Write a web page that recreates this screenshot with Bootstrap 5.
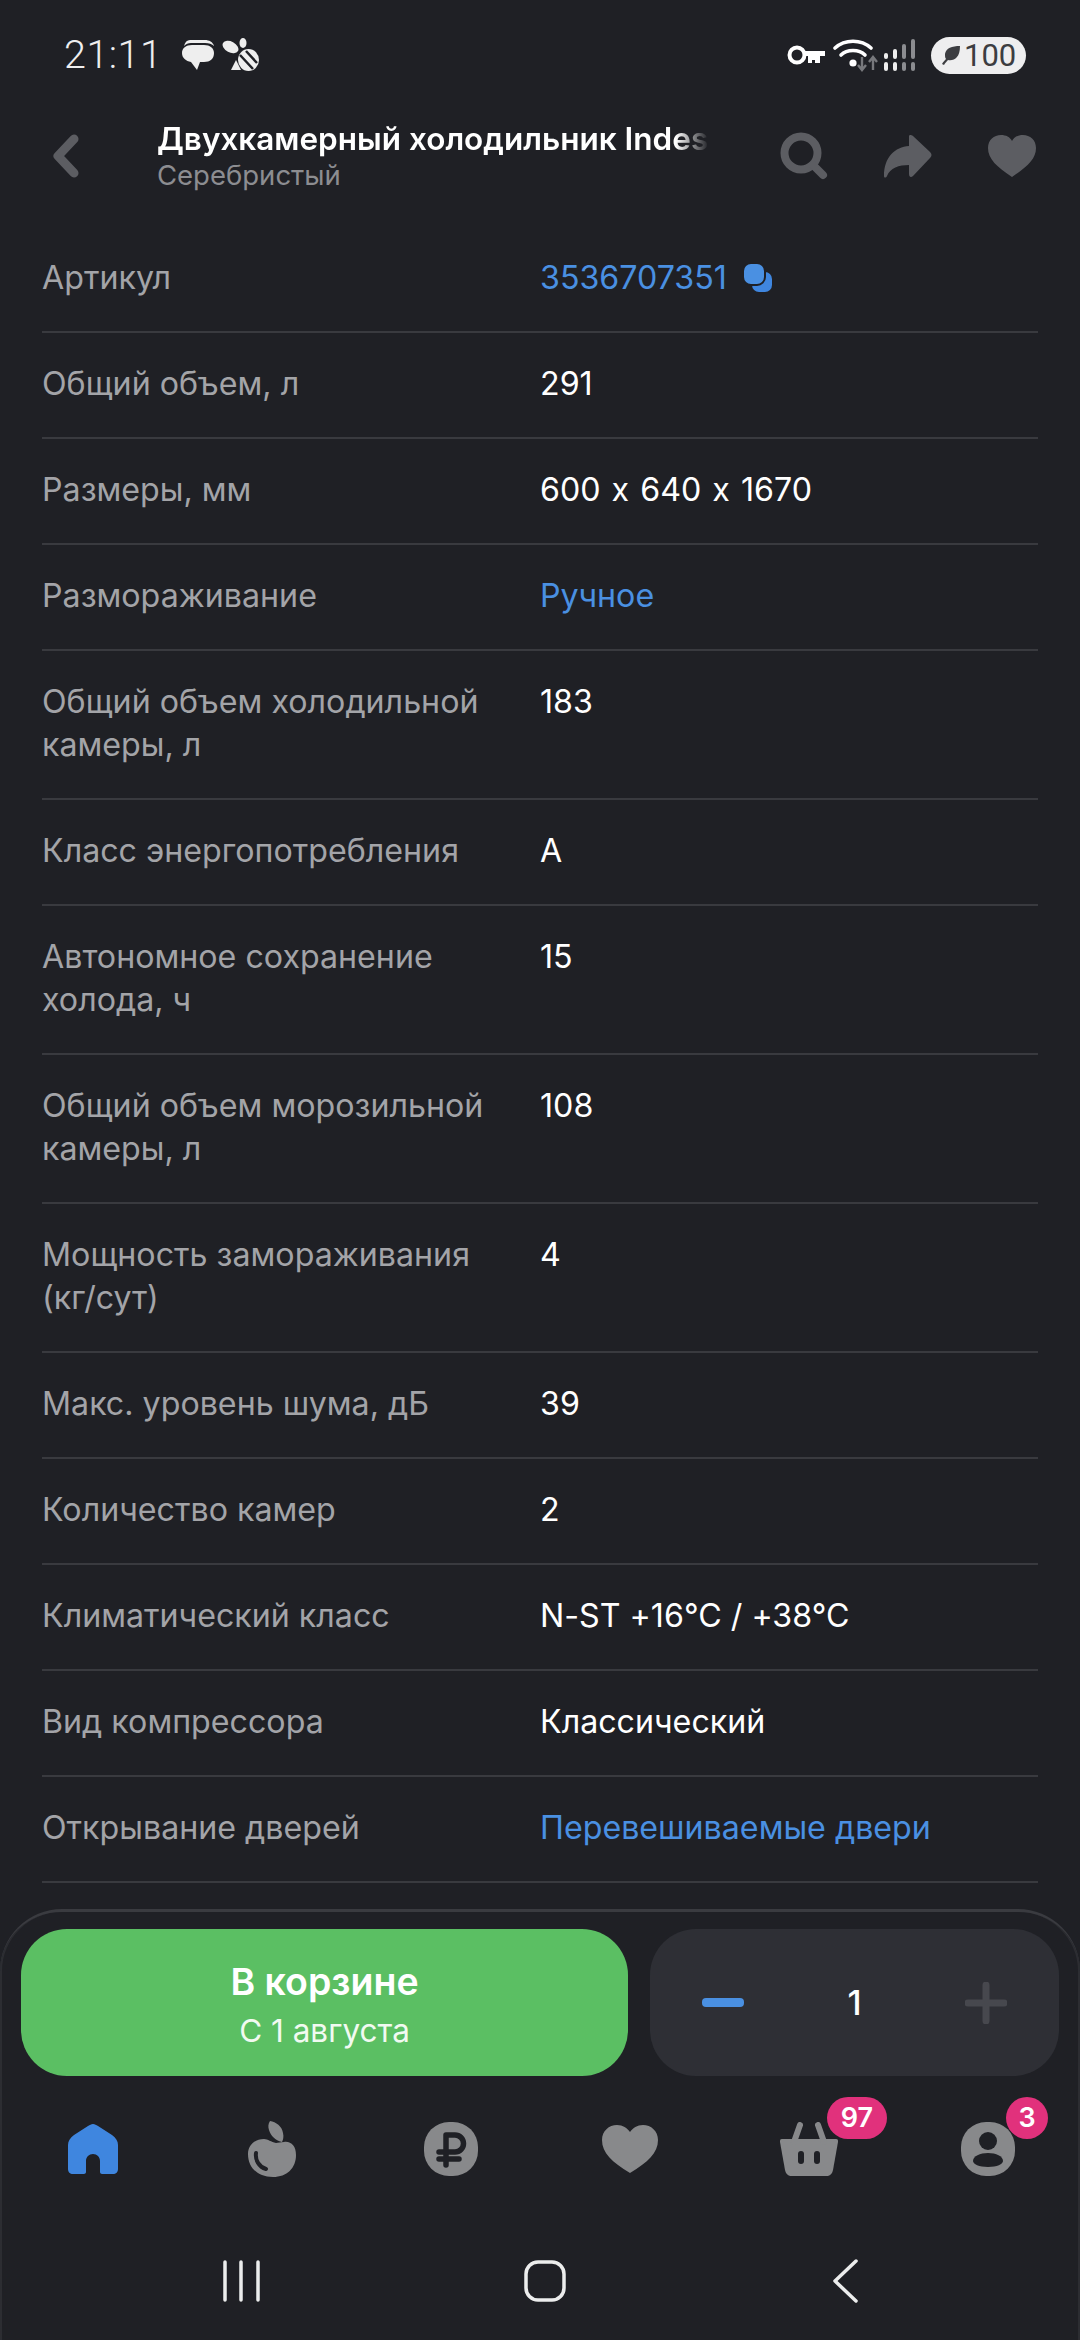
<!DOCTYPE html>
<html lang="ru">
<head>
  <meta charset="UTF-8">
  <meta name="viewport" content="width=device-width, initial-scale=1.0">
  <title>Характеристики</title>
  <link href="https://cdn.jsdelivr.net/npm/bootstrap@5.3.0/dist/css/bootstrap.min.css" rel="stylesheet">
  <style>
    body { background: #1f2025; color: #fff; font-family: Inter, "Noto Sans", sans-serif; font-feature-settings: "calt" 0; }
    .phone { width: 1080px; height: 2340px; overflow: hidden; }
    svg { display: block; flex: none; }

    .status-bar { height: 90px; padding: 20px 54px 0 64px; }
    .status-time { font-family: Roboto, sans-serif; font-weight: 300; font-size: 39.5px; line-height: 1; color: #eeeeef; letter-spacing: .5px; }
    .status-chat { margin-left: 20px; }
    .battery-pill { width: 95px; height: 37px; border-radius: 19px; background: #eeeeef; color: #3c3d41; font-family: Roboto, sans-serif; font-size: 31px; line-height: 37px; padding-left: 10px; gap: 3px; }

    .top-bar { height: 137px; padding: 0 0 6px 52px; }
    .title-box { width: 552px; margin-left: 78px; }
    .title-main { font-size: 31.5px; font-weight: 600; line-height: 40px; white-space: nowrap; -webkit-mask-image: linear-gradient(to right, #000 94%, transparent 100%); mask-image: linear-gradient(to right, #000 94%, transparent 100%); }
    .title-sub { font-size: 27.5px; line-height: 33px; color: #8c8d91; }
    .top-actions { margin-left: 71px; gap: 56px; }

    .spec-list { padding: 0 42px; }
    .spec-row { display: flex; border-bottom: 2px solid #393a3f; padding: 29px 0 32px; font-size: 32.2px; line-height: 43px; }
    .spec-label { width: 498px; flex: none; color: #a3a4a8; }
    .spec-value { color: #fff; }
    .spec-link { color: #4a90e2; }
    .spec-dims { word-spacing: 2px; }

    .bottom-sheet { height: 431px; margin-top: 25px; border-top: 3px solid #3a3b40; border-radius: 62px 62px 0 0; box-shadow: inset 3px 0 0 -1px #2c2d32, inset -3px 0 0 -1px #2c2d32; background: #1f2025; padding-top: 17px; flex: none; }
    .buy-row { padding: 0 21px; gap: 22px; height: 147px; }
    .buy-btn { width: 607px; height: 147px; padding-top: 5px; border-radius: 46px; background: #5bbf63; color: #fff; }
    .buy-title { font-size: 37.5px; font-weight: 600; line-height: 44px; }
    .buy-sub { font-size: 31.5px; line-height: 40px; margin-top: 7px; color: #f1faf1; }
    .qty-box { width: 409px; height: 147px; border-radius: 46px; background: #2e2f35; padding: 0 52px; font-size: 34px; font-weight: 500; }

    .tab-bar { padding: 0 3px; height: 100px; margin-top: 43px; }
    .tab-item { width: 179px; height: 60px; position: relative; }
    .tab-badge { position: absolute; top: -22px; height: 42px; border-radius: 21px; background: #e1317c; color: #fff; font-size: 27px; font-weight: 600; line-height: 42px; text-align: center; }
    .badge-cart { left: 108px; width: 60px; }
    .badge-user { left: 108px; width: 42px; }

    .gesture-bar { height: 42px; margin-top: 41px; padding: 0 222px; }
    .gesture-bar svg:nth-child(2) { margin-left: -2px; }
  </style>
</head>
<body>
<div class="phone d-flex flex-column">

  <div class="status-bar d-flex align-items-center">
    <span class="status-time">21:11</span>
    <svg class="status-chat" width="32" height="32" viewBox="0 0 32 32"><path d="M8 1h15c4 0 8 2 9 6-2-2-5-3-9-3H9C6 4 4 5 2 7c1-4 3-6 6-6z" fill="#eee"/><path d="M10 6h12c6 0 10 3 10 8 0 6-4 9-10 9h-4l-3 8-6-8C4 22 0 19 0 14 0 9 4 6 10 6z" fill="#eee"/></svg>
    <svg class="ms-2" width="38" height="34" viewBox="0 0 38 34"><ellipse cx="8.5" cy="9" rx="8.5" ry="5.5" transform="rotate(28 8.5 9)" fill="#eee"/><ellipse cx="21" cy="5" rx="3.5" ry="5" fill="#eee"/><ellipse cx="26.5" cy="22" rx="10.5" ry="11" fill="#eee"/><path d="M18 17l13 14M24 13l11 12" stroke="#1f2025" stroke-width="2.5"/><path d="M14 22l-5 10h10z" fill="#eee"/></svg>
    <div class="ms-auto d-flex align-items-center">
      <svg width="38" height="20" viewBox="0 0 38 20"><circle cx="10" cy="10" r="7.5" fill="none" stroke="#fff" stroke-width="4"/><path d="M17 6h21v5h-5v7h-5v-3h-3v3h-4v-7h-4z" fill="#fff"/></svg>
      <svg class="ms-2" width="46" height="34" viewBox="0 0 46 34"><g fill="none" stroke="#fff" stroke-width="3.6" stroke-linecap="round"><path d="M2 10c10-9 26-9 36 0"/><path d="M8 17c6-6 18-6 24 0"/></g><circle cx="20" cy="25" r="3.6" fill="#fff"/><path d="M29 19v12M25 27l4 5 4-5M40 32V20M36 24l4-5 4 5" fill="none" stroke="#77787c" stroke-width="2.4"/></svg>
      <svg class="ms-1" width="32" height="34" viewBox="0 0 32 34"><g fill="#eee"><rect x="1" y="24" width="4" height="9" rx="2"/><rect x="1" y="15" width="4" height="6" rx="2"/><rect x="10" y="24" width="4" height="9" rx="2"/><rect x="10" y="11" width="4" height="10" rx="2"/></g><g fill="#8b8c90"><rect x="19" y="24" width="4" height="9" rx="2"/><rect x="19" y="6" width="4" height="15" rx="2"/><rect x="28" y="24" width="4" height="9" rx="2"/><rect x="28" y="1" width="4" height="20" rx="2"/></g></svg>
      <div class="battery-pill ms-3 d-flex align-items-center">
        <svg width="20" height="20" viewBox="0 0 20 20"><path d="M19 1C11 1 5 3 4 9c0 2 0 4 1 5-1 1-3 3-4 5l2 1c1-2 3-4 4-5 6 1 12-2 12-14z" fill="#3c3d41"/></svg>
        <span>100</span>
      </div>
    </div>
  </div>

  <div class="top-bar d-flex align-items-center">
    <svg width="27" height="44" viewBox="0 0 27 44"><path d="M22 5L6 22l16 17" fill="none" stroke="#5c5d62" stroke-width="9" stroke-linecap="round" stroke-linejoin="round"/></svg>
    <div class="title-box">
      <div class="title-main">Двухкамерный холодильник Indes</div>
      <div class="title-sub">Серебристый</div>
    </div>
    <div class="top-actions d-flex align-items-center">
      <svg width="48" height="48" viewBox="0 0 48 48"><circle cx="21" cy="21" r="16.5" fill="none" stroke="#5c5d62" stroke-width="8"/><path d="M33 33l10 10" stroke="#5c5d62" stroke-width="8" stroke-linecap="round"/></svg>
      <svg width="48" height="44" viewBox="0 0 48 44"><path d="M26 1c1 0 2 0 3 1l17 16c2 2 2 4 0 6L29 42c-2 2-4 1-4-2v-9C15 31 6 34 3 42c-1 2-3 2-3 0C0 23 11 13 25 12V3c0-1 0-2 1-2z" fill="#5c5d62"/></svg>
      <svg width="48" height="42" viewBox="0 0 48 42"><path d="M24 42C9 32 0 24 0 13 0 5 6 0 13 0c5 0 9 2 11 6 2-4 6-6 11-6 7 0 13 5 13 13 0 11-9 19-24 29z" fill="#5c5d62"/></svg>
    </div>
  </div>

  <div class="spec-list flex-grow-1 overflow-hidden">
    <div class="spec-row"><div class="spec-label">Артикул</div><div class="spec-value spec-link d-flex align-items-center">3536707351<svg class="ms-3" width="29" height="29" viewBox="0 0 29 29"><rect x="9" y="9" width="20" height="20" rx="7" fill="#3f86df"/><rect x="0" y="0" width="22" height="22" rx="8" fill="#4a90e2" stroke="#1f2025" stroke-width="2"/></svg></div></div>
    <div class="spec-row"><div class="spec-label">Общий объем, л</div><div class="spec-value">291</div></div>
    <div class="spec-row"><div class="spec-label">Размеры, мм</div><div class="spec-value spec-dims">600 x 640 x 1670</div></div>
    <div class="spec-row"><div class="spec-label">Размораживание</div><div class="spec-value spec-link">Ручное</div></div>
    <div class="spec-row"><div class="spec-label">Общий объем холодильной камеры, л</div><div class="spec-value">183</div></div>
    <div class="spec-row"><div class="spec-label">Класс энергопотребления</div><div class="spec-value">A</div></div>
    <div class="spec-row"><div class="spec-label">Автономное сохранение холода, ч</div><div class="spec-value">15</div></div>
    <div class="spec-row"><div class="spec-label">Общий объем морозильной камеры, л</div><div class="spec-value">108</div></div>
    <div class="spec-row"><div class="spec-label">Мощность замораживания<br>(кг/сут)</div><div class="spec-value">4</div></div>
    <div class="spec-row"><div class="spec-label">Макс. уровень шума, дБ</div><div class="spec-value">39</div></div>
    <div class="spec-row"><div class="spec-label">Количество камер</div><div class="spec-value">2</div></div>
    <div class="spec-row"><div class="spec-label">Климатический класс</div><div class="spec-value">N-ST +16°C / +38°C</div></div>
    <div class="spec-row"><div class="spec-label">Вид компрессора</div><div class="spec-value">Классический</div></div>
    <div class="spec-row"><div class="spec-label">Открывание дверей</div><div class="spec-value spec-link">Перевешиваемые двери</div></div>
  </div>

  <div class="bottom-sheet">
    <div class="buy-row d-flex">
      <div class="buy-btn d-flex flex-column align-items-center justify-content-center">
        <div class="buy-title">В корзине</div>
        <div class="buy-sub">С 1 августа</div>
      </div>
      <div class="qty-box d-flex align-items-center justify-content-between">
        <svg width="42" height="9" viewBox="0 0 42 9"><rect width="42" height="9" rx="4" fill="#4a90e2"/></svg>
        <span>1</span>
        <svg width="42" height="42" viewBox="0 0 42 42"><path d="M3 21h36M21 3v36" stroke="#47484e" stroke-width="7" stroke-linecap="round"/></svg>
      </div>
    </div>

    <div class="tab-bar d-flex">
      <div class="tab-item d-flex align-items-center justify-content-center">
        <svg width="50" height="50" viewBox="0 0 50 50"><path d="M25 0c2 0 3 1 5 2l14 9c4 3 6 6 6 10v24c0 3-2 5-5 5H34c-1 0-2-1-2-2V37c0-4-3-7-7-7s-7 3-7 7v11c0 1-1 2-2 2H5c-3 0-5-2-5-5V21c0-4 2-7 6-10l14-9c2-1 3-2 5-2z" fill="#3f86df"/></svg>
      </div>
      <div class="tab-item d-flex align-items-center justify-content-center">
        <svg width="48" height="56" viewBox="0 0 48 56"><path d="M22 0c6 1 12 5 13 12 1 4 0 7-1 9-7-2-11-6-13-12-1-3-1-6 1-9z" fill="#88898b"/><path d="M16 18c4 0 7 3 12 4 2 0 5-1 8-1 7-1 12 4 12 13 0 13-9 22-23 22C9 56 0 46 0 33c0-9 7-15 16-15z" fill="#88898b"/><path d="M8 32c-1 7 3 14 10 16" fill="none" stroke="#1f2025" stroke-width="4" stroke-linecap="round"/></svg>
      </div>
      <div class="tab-item d-flex align-items-center justify-content-center">
        <svg width="54" height="54" viewBox="0 0 54 54"><rect width="54" height="54" rx="25" fill="#88898b"/><path d="M22 43V13h9a8 8 0 010 17H15M15 37h20" fill="none" stroke="#1f2025" stroke-width="5.5" stroke-linecap="round" stroke-linejoin="round"/></svg>
      </div>
      <div class="tab-item d-flex align-items-center justify-content-center">
        <svg width="56" height="48" viewBox="0 0 56 48"><path d="M28 48C10 37 0 28 0 15 0 6 7 0 15 0c6 0 10 3 13 7 3-4 7-7 13-7 8 0 15 6 15 15 0 13-10 22-28 33z" fill="#88898b"/></svg>
      </div>
      <div class="tab-item d-flex align-items-center justify-content-center">
        <svg width="58" height="54" viewBox="0 0 58 54"><path d="M2 17h54c2 0 2 1 2 3l-5 28c-1 4-3 6-7 6H12c-4 0-6-2-7-6L0 20c0-2 0-3 2-3z" fill="#88898b"/><path d="M14 20L20 3M44 20L38 3" stroke="#88898b" stroke-width="6" stroke-linecap="round"/><rect x="18" y="29" width="6" height="13" rx="3" fill="#1f2025"/><rect x="34" y="29" width="6" height="13" rx="3" fill="#1f2025"/></svg>
        <span class="tab-badge badge-cart">97</span>
      </div>
      <div class="tab-item d-flex align-items-center justify-content-center">
        <svg width="54" height="54" viewBox="0 0 54 54"><rect width="54" height="54" rx="25" fill="#88898b"/><circle cx="27" cy="19" r="9" fill="#1f2025"/><path d="M27 31c8 0 15 3 15 8 0 3-6 6-15 6s-15-3-15-6c0-5 7-8 15-8z" fill="#1f2025"/></svg>
        <span class="tab-badge badge-user">3</span>
      </div>
    </div>

    <div class="gesture-bar d-flex align-items-center justify-content-between">
      <svg width="38" height="42" viewBox="0 0 38 42"><path d="M3 2v38M19 2v38M36 2v38" stroke="#eceded" stroke-width="3.5" stroke-linecap="round"/></svg>
      <svg width="42" height="42" viewBox="0 0 42 42"><rect x="2" y="2" width="38" height="38" rx="12" fill="none" stroke="#eceded" stroke-width="3.5"/></svg>
      <svg width="26" height="44" viewBox="0 0 26 44"><path d="M24 2L3 22l21 20" fill="none" stroke="#eceded" stroke-width="3.5" stroke-linecap="round" stroke-linejoin="round"/></svg>
    </div>
  </div>
</div>
<script src="https://cdn.jsdelivr.net/npm/bootstrap@5.3.0/dist/js/bootstrap.bundle.min.js"></script>
</body>
</html>
